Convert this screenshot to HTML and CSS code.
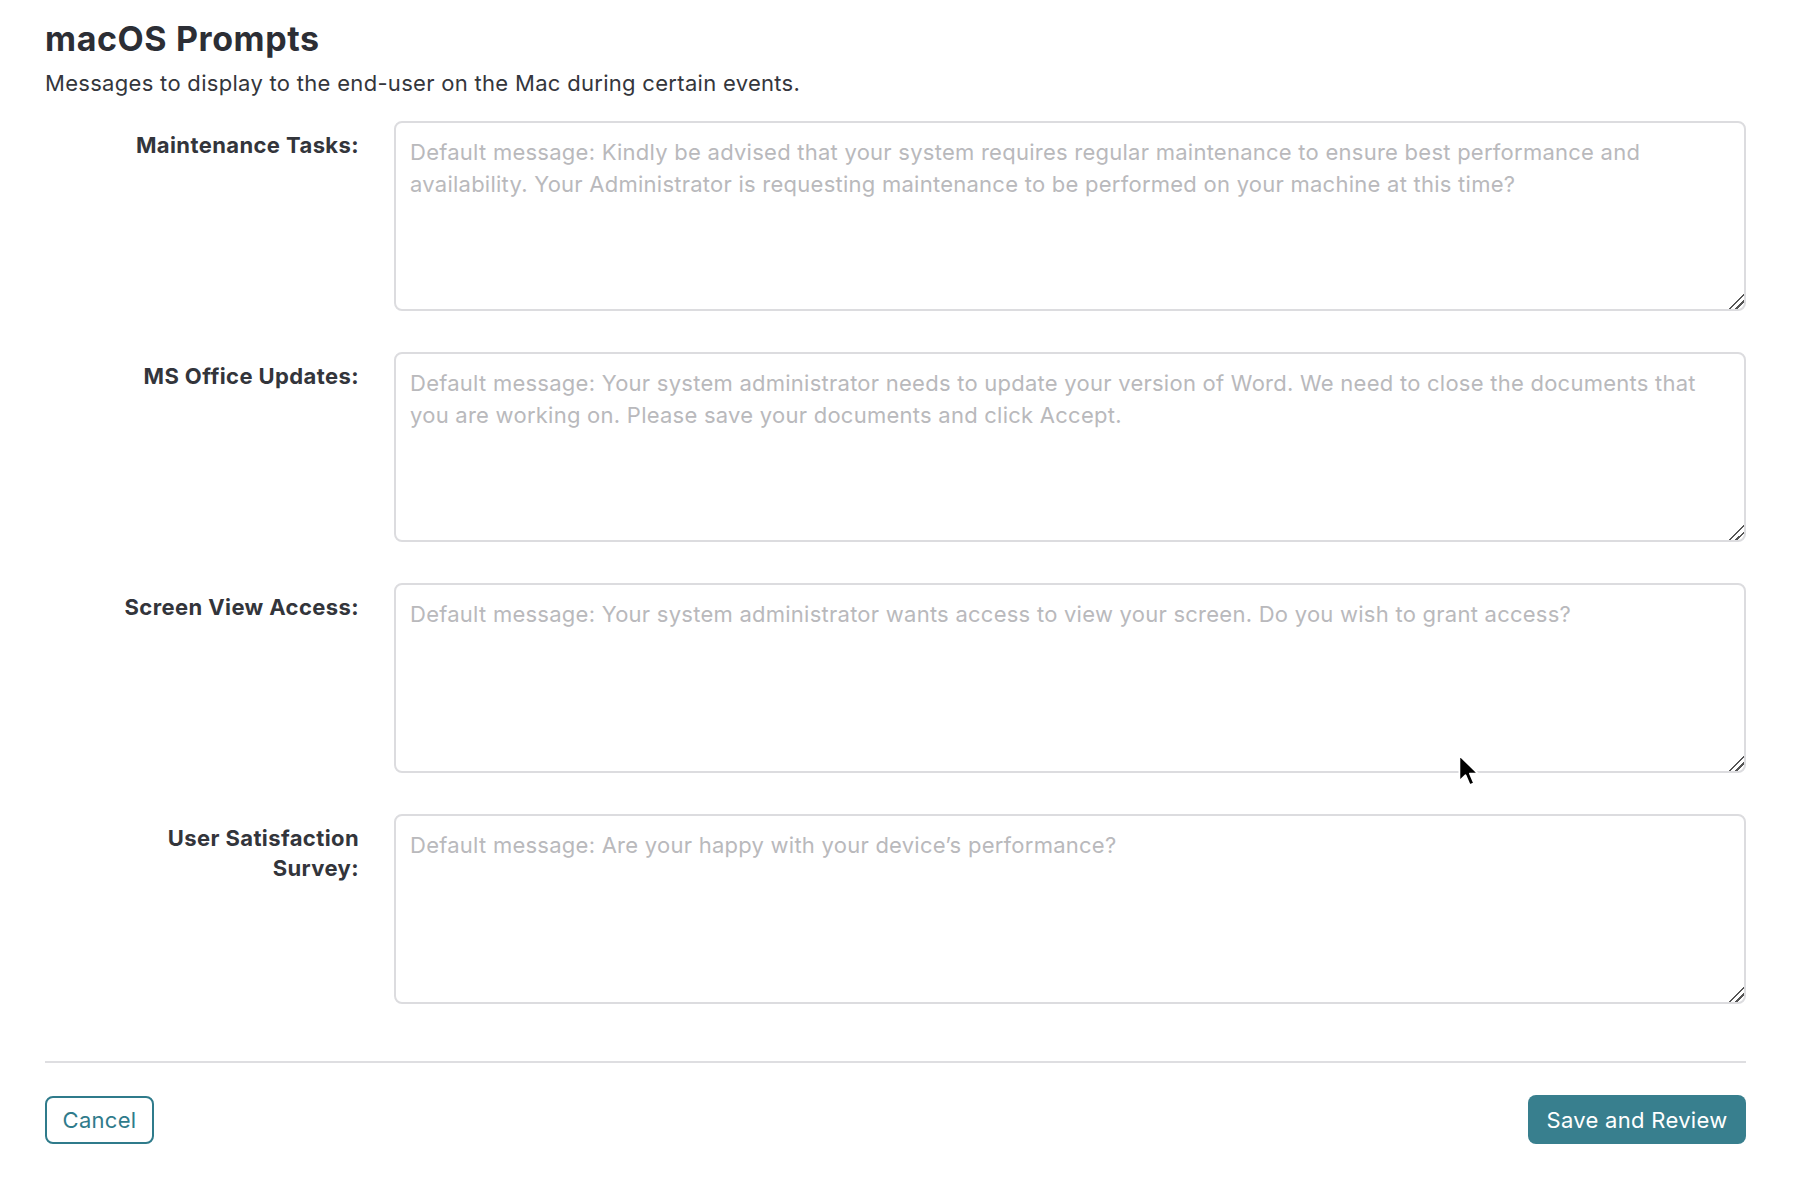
FILE: index.html
```html
<!DOCTYPE html>
<html>
    <head>
        <meta charset="utf-8">
        <title> macOS Prompts </title>

        <link rel="stylesheet" href="styles.css">
    </head>
    <body>
        <div class="page">
            <h1 class="title">macOS Prompts</h1>
            <p class="sub">Messages to display to the end-user on the Mac during certain events.</p>

            <div class="form">
                <label class="label" for="maint">Maintenance Tasks:</label>
                <textarea class="msg" id="maint" placeholder="Default message: Kindly be advised that your system requires regular maintenance to ensure best performance and availability. Your Administrator is requesting maintenance to be performed on your machine at this time?"></textarea>

                <label class="label" for="office">MS Office Updates:</label>
                <textarea class="msg" id="office" placeholder="Default message: Your system administrator needs to update your version of Word. We need to close the documents that you are working on. Please save your documents and click Accept."></textarea>

                <label class="label" for="screen">Screen View Access:</label>
                <textarea class="msg" id="screen" placeholder="Default message: Your system administrator wants access to view your screen. Do you wish to grant access?"></textarea>

                <label class="label" for="survey">User Satisfaction Survey:</label>
                <textarea class="msg" id="survey" placeholder="Default message: Are your happy with your device’s performance?"></textarea>
            </div>

            <hr class="divider">

            <div class="actions">
                <button class="cancel_btn">Cancel</button>
                <button class="save_btn">Save and Review</button>
            </div>

            <!-- mouse pointer from the screenshot -->
            <svg class="pointer" width="25" height="36" viewBox="0 0 22 32">
                <path d="M2 2 L2 25 L7.5 19.8 L11.2 28.5 L15 26.9 L11.4 18.4 L18.6 18.4 Z" fill="#000" stroke="#fff" stroke-width="1.6" stroke-linejoin="round"/>
            </svg>
        </div>
    </body>
</html>
```

FILE: styles.css
```css
body{
    margin: 0;
    background-color: white;
    font-family: Inter, "Noto Sans", sans-serif;
    color: #2e3036;
}
.page{
    position: relative;
    padding: 19px 70px 40px 45px;
}
.title{
    margin: 0;
    font-size: 34px;
    line-height: 40px;
    font-weight: 700;
    letter-spacing: 0.6px;
    color: #2c2e35;
}
.sub{
    margin: 9px 0 23px 0;
    font-size: 22px;
    line-height: 30px;
    letter-spacing: 0.3px;
    color: #34363c;
}
.form{
    display: grid;
    grid-template-columns: 314px 1fr;
    column-gap: 35px;
    row-gap: 41px;
}
.label{
    padding: 9px 0 0 50px;
    text-align: right;
    font-size: 22px;
    line-height: 30px;
    font-weight: 700;
    letter-spacing: 0.4px;
    color: #33353b;
}
.msg{
    box-sizing: border-box;
    display: block;
    width: 100%;
    height: 190px;
    margin: 0;
    padding: 13px 15px 11px 14px;
    border: 2px solid #dcdcdf;
    border-radius: 8px;
    font-family: Inter, "Noto Sans", sans-serif;
    font-size: 22px;
    line-height: 32px;
    letter-spacing: 0.25px;
    color: #33353b;
    resize: vertical;
    outline: none;
}
.msg::placeholder{
    color: #b9b9bc;
}
.msg::-webkit-resizer{
    background: linear-gradient(135deg, transparent 48%, #555 48%, #555 56%, transparent 56%, transparent 70%, #555 70%, #555 78%, transparent 78%);
}
.divider{
    margin: 57px 0 32px 0;
    border: none;
    border-top: 2px solid #dedee1;
}
.actions{
    display: flex;
    justify-content: space-between;
    align-items: center;
}
.cancel_btn,.save_btn{
    box-sizing: border-box;
    height: 48px;
    border-radius: 8px;
    font-family: Inter, "Noto Sans", sans-serif;
    font-size: 22px;
    letter-spacing: 0.3px;
    cursor: pointer;
}
.cancel_btn{
    width: 109px;
    background-color: white;
    border: 2px solid #2f7b8b;
    color: #2f7b8b;
}
.save_btn{
    width: 218px;
    height: 49px;
    background-color: #387f8e;
    border: none;
    color: white;
}
.pointer{
    position: absolute;
    left: 1457px;
    top: 753px;
}
```
